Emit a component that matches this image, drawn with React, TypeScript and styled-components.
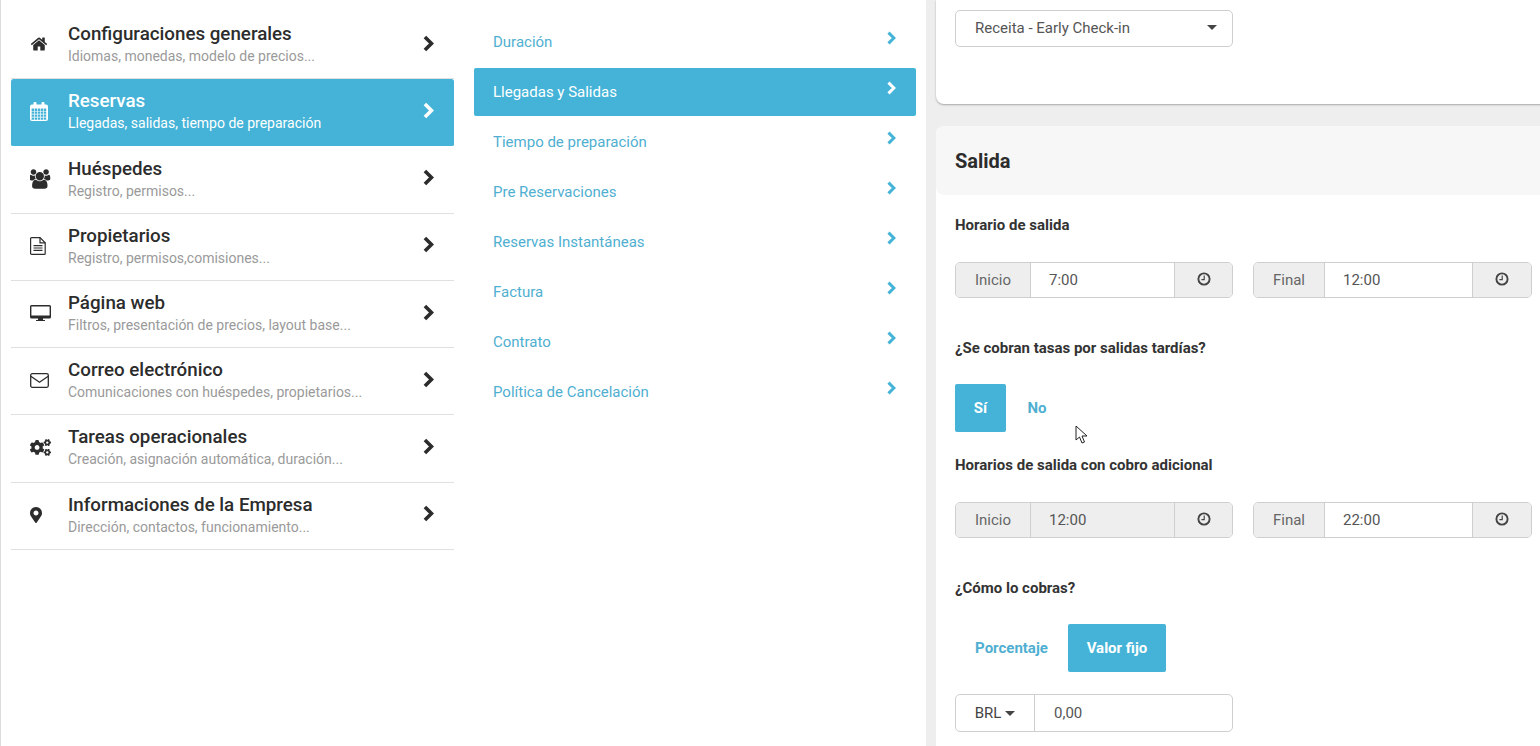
import React from "react";
import styled, { createGlobalStyle } from "styled-components";
import { FaCogs, FaMapMarkerAlt } from "react-icons/fa";

const BLUE = "#44b3d7";

const Global = createGlobalStyle`
  html, body { margin: 0; padding: 0; height: 746px; overflow: hidden; background: #fff; }
  body { font-family: Roboto, "Liberation Sans", sans-serif; color: #2c2c2c; }
  * { box-sizing: border-box; }
`;

const Page = styled.div`
  display: flex;
  width: 1540px;
  height: 746px;
  overflow: hidden;
  border-left: 1px solid #dcdcdc;
`;

const MainMenu = styled.nav`
  width: 443px;
  margin-left: 10px;
  padding-top: 12.2px;
  flex: none;
`;

const MainItem = styled.div<{ $active?: boolean }>`
  display: flex;
  align-items: center;
  height: 67.2px;
  padding: 0 20px 0 19px;
  background: ${(p) => (p.$active ? BLUE : "transparent")};
  background-clip: padding-box;
  border-bottom: 1px solid ${(p) => (p.$active ? "transparent" : "#e0e0e0")};
  color: ${(p) => (p.$active ? "#fff" : "#2c2c2c")};
  border-radius: ${(p) => (p.$active ? "2px" : "0")};
`;

const MainIcon = styled.span<{ $size?: number; $inset?: number }>`
  width: 38px;
  flex: none;
  display: flex;
  align-items: center;
  font-size: ${(p) => p.$size ?? 18}px;
  position: relative;
  top: -1px;
  left: ${(p) => p.$inset ?? 0}px;
`;

const MainText = styled.div`
  flex: 1;
  min-width: 0;
  padding-bottom: 1px;
`;

const MainTitle = styled.div`
  font-size: 18.75px;
  line-height: 22px;
  font-weight: 500;
`;

const MainSub = styled.div<{ $active?: boolean }>`
  font-size: 14px;
  line-height: 20px;
  margin-top: 1px;
  color: ${(p) => (p.$active ? "#fff" : "#9a9a9a")};
`;

const MainArrow = styled.span`
  display: flex;
  position: relative;
  top: -2px;
`;

const SubMenu = styled.nav`
  width: 442px;
  margin-left: 20px;
  padding-top: 18px;
  flex: none;
`;

const SubItem = styled.div<{ $active?: boolean }>`
  display: flex;
  justify-content: space-between;
  align-items: center;
  height: 48px;
  margin-bottom: 2px;
  padding: 0 20px 0 19px;
  font-size: 15px;
  background: ${(p) => (p.$active ? BLUE : "transparent")};
  color: ${(p) => (p.$active ? "#fff" : "#4fafd1")};
  border-radius: 2px;
`;

const SubArrow = styled.span<{ $active?: boolean }>`
  display: flex;
  color: ${(p) => (p.$active ? "#fff" : BLUE)};
  position: relative;
  top: -4px;
`;

const Content = styled.main`
  flex: 1;
  margin-left: 10px;
  padding-left: 10px;
  background: #eeeeee;
  min-width: 0;
  overflow: hidden;
`;

const TopCard = styled.section`
  height: 104px;
  width: 700px;
  padding: 10px 19px;
  background: #fff;
  border-radius: 0 0 0 8px;
  box-shadow: 0 1px 2px rgba(0, 0, 0, 0.3);
`;

const SelectBox = styled.div`
  display: flex;
  justify-content: space-between;
  align-items: center;
  width: 278px;
  height: 37px;
  padding: 0 15px 2px 19px;
  border: 1px solid #cfcfcf;
  border-radius: 5px;
  font-size: 15px;
  color: #555;
  background: #fff;
`;

const Caret = styled.span`
  width: 0;
  height: 0;
  border-left: 5px solid transparent;
  border-right: 5px solid transparent;
  border-top: 5px solid #444;
`;

const Card = styled.section`
  width: 700px;
  margin-top: 22px;
  height: 640px;
  background: #fff;
  border-radius: 8px 0 0 0;
`;

const CardHeader = styled.header`
  height: 69px;
  padding: 0 19px;
  display: flex;
  align-items: center;
  background: #f7f7f7;
  border-radius: 8px 0 0 8px;
  font-size: 20px;
  font-weight: 700;
  color: #2c2c2c;
`;

const CardBody = styled.div`
  padding: 20px 0 0 19px;
`;

const Label = styled.div<{ $mt?: number }>`
  font-size: 15px;
  line-height: 20px;
  font-weight: 700;
  color: #333;
  margin-top: ${(p) => p.$mt ?? 0}px;
`;

const InputRow = styled.div`
  display: flex;
  gap: 20px;
  margin-top: 27px;
`;

const Group = styled.div<{ $w: number }>`
  display: flex;
  flex: none;
  width: ${(p) => p.$w}px;
  height: 36px;
  border: 1px solid #cfcfcf;
  border-radius: 5px;
  overflow: hidden;
  font-size: 15px;
  color: #555;
`;

const Addon = styled.div<{ $w: number }>`
  flex: none;
  width: ${(p) => p.$w}px;
  display: flex;
  align-items: center;
  justify-content: center;
  background: #eeeeee;
  color: #666;
`;

const TimeValue = styled.div<{ $disabled?: boolean }>`
  flex: 1;
  display: flex;
  align-items: center;
  padding-left: 18px;
  background: ${(p) => (p.$disabled ? "#eeeeee" : "#fff")};
  border-left: 1px solid #cfcfcf;
  border-right: 1px solid #cfcfcf;
`;

const Clock = styled.svg`
  width: 14px;
  height: 14px;
  color: #444;
  position: relative;
  top: -1px;
`;

const Toggle = styled.div`
  display: flex;
  margin-top: 26px;
`;

const ToggleButton = styled.div<{ $active?: boolean; $w: number }>`
  width: ${(p) => p.$w}px;
  height: 48px;
  display: flex;
  align-items: center;
  justify-content: center;
  font-size: 15px;
  font-weight: 700;
  border-radius: 2px;
  background: ${(p) => (p.$active ? BLUE : "transparent")};
  color: ${(p) => (p.$active ? "#fff" : "#4fafd1")};
`;

const MoneyGroup = styled.div`
  display: flex;
  width: 278px;
  height: 38px;
  margin-top: 22px;
  border: 1px solid #cfcfcf;
  border-radius: 5px;
  font-size: 15px;
  color: #555;
`;

const Currency = styled.div`
  width: 79px;
  flex: none;
  display: flex;
  align-items: center;
  justify-content: center;
  gap: 4px;
  color: #444;
  border-right: 1px solid #cfcfcf;
`;

const MoneyValue = styled.div`
  flex: 1;
  display: flex;
  align-items: center;
  padding-left: 19px;
`;

const Cursor = styled.svg`
  position: absolute;
  left: 1075px;
  top: 425px;
  width: 14px;
  height: 20px;
`;

function Chevron({ w, h }: { w: number; h: number }) {
  return (
    <svg width={w} height={h} viewBox="0 0 11 16">
      <polyline points="2.6,1.8 8.8,8 2.6,14.2" fill="none" stroke="currentColor" strokeWidth="3.4" />
    </svg>
  );
}

function calendarPath() {
  let d = "M2 2.5H3.5V1a1 1 0 0 1 1-1h1a1 1 0 0 1 1 1V2.5H11.5V1a1 1 0 0 1 1-1h1a1 1 0 0 1 1 1V2.5H16a2 2 0 0 1 2 2V17a2 2 0 0 1-2 2H2a2 2 0 0 1-2-2V4.5a2 2 0 0 1 2-2Z";
  for (let r = 0; r < 4; r++) {
    for (let c = 0; c < 5; c++) {
      const x = 1.6 + c * 3.05;
      const y = 6.6 + r * 2.95;
      d += `M${x.toFixed(2)} ${y.toFixed(2)}h2.4v2.3h-2.4Z`;
    }
  }
  return d;
}

const HomeIcon = () => (
  <svg width="18" height="18" viewBox="0 0 1792 1792" fill="currentColor">
    <path d="M1472 992v480q0 26-19 45t-45 19h-384v-384h-256v384h-384q-26 0-45-19t-19-45v-480q0-1 .5-3t.5-3l575-474 575 474q1 2 1 6zm223-69l-62 74q-8 9-21 11h-3q-13 0-21-7l-692-577-692 577q-12 8-24 7-13-2-21-11l-62-74q-8-10-7-23.5t11-21.5l719-599q32-26 76-26t76 26l244 204v-195q0-14 9-23t23-9h192q14 0 23 9t9 23v408l219 182q10 8 11 21.5t-7 23.5z" />
  </svg>
);

const CalendarIcon = () => (
  <svg width="18" height="19" viewBox="0 0 18 19" fill="currentColor">
    <path fillRule="evenodd" d={calendarPath()} />
  </svg>
);

const UsersIcon = () => (
  <svg width="21" height="20" viewBox="0 0 1920 1792" fill="currentColor">
    <path d="M529 896q-162 5-265 128h-134q-82 0-138-40.5t-56-118.5q0-353 124-353 6 0 43.5 21t97.5 42.5 119 21.5q67 0 133-23-5 37-5 66 0 139 81 256zm1071 637q0 120-73 189.5t-194 69.5h-874q-121 0-194-69.5t-73-189.5q0-53 3.5-103.5t14-109 26.5-108.5 43-97.5 62-81 85.5-53.5 111.5-20q10 0 43 21.5t73 48 107 48 135 21.5 135-21.5 107-48 73-48 43-21.5q61 0 111.5 20t85.5 53.5 62 81 43 97.5 26.5 108.5 14 109 3.5 103.5zm-1024-1277q0 106-75 181t-181 75-181-75-75-181 75-181 181-75 181 75 75 181zm704 384q0 159-112.5 271.5t-271.5 112.5-271.5-112.5-112.5-271.5 112.5-271.5 271.5-112.5 271.5 112.5 112.5 271.5zm576 225q0 78-56 118.5t-138 40.5h-134q-103-123-265-128 81-117 81-256 0-29-5-66 66 23 133 23 59 0 119-21.5t97.5-42.5 43.5-21q124 0 124 353zm-128-609q0 106-75 181t-181 75-181-75-75-181 75-181 181-75 181 75 75 181z" />
  </svg>
);

const FileIcon = () => (
  <svg width="16" height="18" viewBox="0 0 16 18" fill="none" stroke="currentColor" strokeWidth="1.2">
    <path d="M1.6 .6H10L15.2 5.8V16.4a1 1 0 0 1-1 1H1.6a1 1 0 0 1-1-1V1.6a1 1 0 0 1 1-1Z" />
    <path d="M10 .6V5.8H15.2" />
    <path d="M3.5 8.6H12.5M3.5 11H12.5M3.5 13.4H12.5" strokeWidth="1.1" />
  </svg>
);

const DesktopIcon = () => (
  <svg width="21" height="18" viewBox="0 0 21 18" fill="currentColor">
    <path fillRule="evenodd" d="M1.5 1H19.5A1.5 1.5 0 0 1 21 2.5V13A1.5 1.5 0 0 1 19.5 14.5H13V16H15V17H6V16H8V14.5H1.5A1.5 1.5 0 0 1 0 13V2.5A1.5 1.5 0 0 1 1.5 1ZM1.4 2.4V11.4H19.6V2.4Z" />
  </svg>
);

const EnvelopeIcon = () => (
  <svg width="19" height="15" viewBox="0 0 19 15" fill="none" stroke="currentColor" strokeWidth="1.3">
    <rect x=".7" y=".7" width="17.6" height="13.6" rx="1.5" />
    <path d="M.8 3.2L9.5 9.2L18.2 3.2" />
  </svg>
);

const mainItems = [
  { icon: <HomeIcon />, title: "Configuraciones generales", sub: "Idiomas, monedas, modelo de precios..." },
  { icon: <CalendarIcon />, title: "Reservas", sub: "Llegadas, salidas, tiempo de preparación", active: true },
  { icon: <UsersIcon />, title: "Huéspedes", sub: "Registro, permisos..." },
  { icon: <FileIcon />, title: "Propietarios", sub: "Registro, permisos,comisiones..." },
  { icon: <DesktopIcon />, title: "Página web", sub: "Filtros, presentación de precios, layout base..." },
  { icon: <EnvelopeIcon />, title: "Correo electrónico", sub: "Comunicaciones con huéspedes, propietarios..." },
  { icon: <FaCogs />, size: 21, title: "Tareas operacionales", sub: "Creación, asignación automática, duración..." },
  { icon: <FaMapMarkerAlt />, size: 16, inset: -2, title: "Informaciones de la Empresa", sub: "Dirección, contactos, funcionamiento..." },
];

const subItems = [
  "Duración", "Llegadas y Salidas", "Tiempo de preparación", "Pre Reservaciones",
  "Reservas Instantáneas", "Factura", "Contrato", "Política de Cancelación",
];

function TimeGroup(props: { w: number; label: string; labelW: number; clockW: number; value: string; disabled?: boolean }) {
  return (
    <Group $w={props.w}>
      <Addon $w={props.labelW}>{props.label}</Addon>
      <TimeValue $disabled={props.disabled}>{props.value}</TimeValue>
      <Addon $w={props.clockW}>
        <Clock viewBox="0 0 14 14" fill="none" stroke="currentColor">
          <circle cx="7" cy="7" r="5.6" strokeWidth="1.9" />
          <path d="M7.2 3.6V7.6H4.4" strokeWidth="1.2" />
        </Clock>
      </Addon>
    </Group>
  );
}

export default function App() {
  return (
    <>
      <Global />
      <Page>
        <MainMenu>
          {mainItems.map((m) => (
            <MainItem key={m.title} $active={m.active}>
              <MainIcon $size={m.size} $inset={m.inset}>{m.icon}</MainIcon>
              <MainText>
                <MainTitle>{m.title}</MainTitle>
                <MainSub $active={m.active}>{m.sub}</MainSub>
              </MainText>
              <MainArrow><Chevron w={12} h={17} /></MainArrow>
            </MainItem>
          ))}
        </MainMenu>
        <SubMenu>
          {subItems.map((s, i) => (
            <SubItem key={s} $active={i === 1}>
              {s}
              <SubArrow $active={i === 1}><Chevron w={10} h={14} /></SubArrow>
            </SubItem>
          ))}
        </SubMenu>
        <Content>
          <TopCard>
            <SelectBox>
              Receita - Early Check-in
              <Caret />
            </SelectBox>
          </TopCard>
          <Card>
            <CardHeader>Salida</CardHeader>
            <CardBody>
              <Label>Horario de salida</Label>
              <InputRow>
                <TimeGroup w={278} label="Inicio" labelW={74} clockW={57} value="7:00" />
                <TimeGroup w={279} label="Final" labelW={70} clockW={58} value="12:00" />
              </InputRow>
              <Label $mt={40}>¿Se cobran tasas por salidas tardías?</Label>
              <Toggle>
                <ToggleButton $active $w={51}>Sí</ToggleButton>
                <ToggleButton $w={62}>No</ToggleButton>
              </Toggle>
              <Label $mt={23}>Horarios de salida con cobro adicional</Label>
              <InputRow>
                <TimeGroup w={278} label="Inicio" labelW={74} clockW={57} value="12:00" disabled />
                <TimeGroup w={279} label="Final" labelW={70} clockW={58} value="22:00" />
              </InputRow>
              <Label $mt={40}>¿Cómo lo cobras?</Label>
              <Toggle>
                <ToggleButton $w={113}>Porcentaje</ToggleButton>
                <ToggleButton $active $w={98}>Valor fijo</ToggleButton>
              </Toggle>
              <MoneyGroup>
                <Currency>BRL <Caret /></Currency>
                <MoneyValue>0,00</MoneyValue>
              </MoneyGroup>
            </CardBody>
          </Card>
        </Content>
      </Page>
      <Cursor viewBox="0 0 14 20">
        <path d="M1 1 L1 15 L4.5 12 L7 18 L9.5 17 L7 11 L12 11 Z" fill="#fff" stroke="#222" strokeWidth="1" />
      </Cursor>
    </>
  );
}
